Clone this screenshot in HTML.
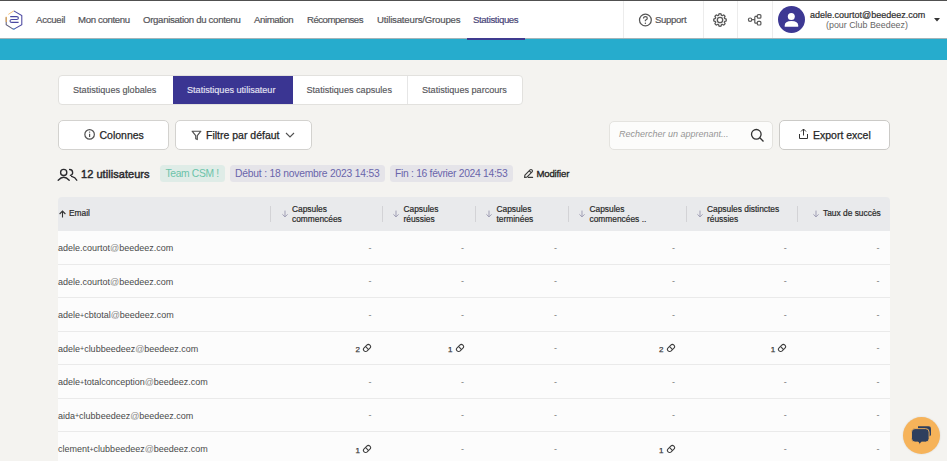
<!DOCTYPE html>
<html><head><meta charset="utf-8">
<style>
*{box-sizing:border-box;margin:0;padding:0}
html,body{width:947px;height:461px;overflow:hidden;background:#f4f3f0;font-family:"Liberation Sans",sans-serif;color:#333}
.a{position:absolute;white-space:nowrap}
#topline{position:absolute;left:0;top:0;width:947px;height:1px;background:#505050}
#nav{position:absolute;left:0;top:1px;width:947px;height:37px;background:#fff}
#teal{position:absolute;left:0;top:38px;width:947px;height:22px;background:#26accd;border-top:1px solid #a3b4b8}
.nv{position:absolute;top:13.5px;font-size:9.6px;color:#55555a;line-height:11px;-webkit-text-stroke:0.2px #55555a}
.sep{position:absolute;top:1px;width:1px;height:37px;background:#ececec}
.tabs{position:absolute;left:58px;top:75px;width:465px;height:30px;background:#fff;border:1px solid #e2e1de;border-radius:4px;overflow:hidden}
.tab{position:absolute;top:10px;font-size:9.1px;color:#56565b;line-height:11px;-webkit-text-stroke:0.15px #56565b}
.btn{position:absolute;background:#fff;border:1px solid #d3d2cf;border-radius:5px}
.bt{position:absolute;font-size:10.5px;color:#262626;line-height:12px;-webkit-text-stroke:0.25px #262626}
.badge{position:absolute;top:164.7px;height:17.6px;border-radius:3.5px}
.bdt{position:absolute;top:167.6px;font-size:9.8px;line-height:11px}
#thead{position:absolute;left:58px;top:197px;width:832px;height:34px;background:#e9eaec;border-radius:4px 4px 0 0}
.hs{position:absolute;top:206px;width:1px;height:15.5px;background:#d3d3d6}
.ht{position:absolute;font-size:8.4px;color:#2a2a2a;line-height:9.3px;-webkit-text-stroke:0.2px #2a2a2a}
.row{position:absolute;left:58px;width:832px;height:33.4px;background:#fafafa;border-bottom:1px solid #e8e8e8}
.em{position:absolute;left:58px;font-size:9px;color:#4a4a4a;line-height:11px}
.d{position:absolute;font-size:9px;color:#777;line-height:10px}
</style></head><body>
<div id="topline"></div>
<div id="nav"></div>
<div id="teal"></div>

<!-- logo -->
<svg class="a" style="left:4px;top:9px" width="20" height="22" viewBox="0 0 20 22">
  <defs>
    <linearGradient id="lg" x1="0" y1="0" x2="1" y2="1">
      <stop offset="0" stop-color="#f2b04e"/><stop offset="0.45" stop-color="#6c5f9a"/><stop offset="1" stop-color="#4d8fd8"/>
    </linearGradient>
  </defs>
  <path d="M9.8 1.9 L17.8 6.6 V15.6 L9.5 20.4" fill="none" stroke="#4a47a0" stroke-width="1.05"/>
  <path d="M9.5 20.4 L2.2 15.8 V8.2" fill="none" stroke="#5f5d7c" stroke-width="1.05"/>
  <path d="M2.2 7.8 V13" fill="none" stroke="#f0ad4a" stroke-width="1.05"/>
  <path d="M4.3 5.4 L9.8 1.9" fill="none" stroke="#f4c27a" stroke-width="1"/>
  <path d="M9.3 20.2 L10.6 19.6" fill="none" stroke="#4fa3e0" stroke-width="1.3"/>
  <path d="M6.2 7.6 H12.6 Q14.4 7.6 14.4 9.1 Q14.4 10.5 12.6 10.5 H7.8 Q6 10.5 6 12 Q6 13.4 7.8 13.4 H14.6" fill="none" stroke="#4a47a0" stroke-width="1.1"/>
</svg>

<div class="nv" style="left:36px;letter-spacing:-0.25px">Accueil</div>
<div class="nv" style="left:78px;letter-spacing:-0.33px">Mon contenu</div>
<div class="nv" style="left:143px;letter-spacing:-0.3px">Organisation du contenu</div>
<div class="nv" style="left:254px;letter-spacing:-0.39px">Animation</div>
<div class="nv" style="left:307px;letter-spacing:-0.49px">Récompenses</div>
<div class="nv" style="left:377px;letter-spacing:-0.18px">Utilisateurs/Groupes</div>
<div class="nv" style="left:473px;color:#3f3a8f;letter-spacing:-0.36px">Statistiques</div>
<div class="a" style="left:466.5px;top:38px;width:58px;height:2px;background:#3f3a8f;z-index:2"></div>

<div class="sep" style="left:623px"></div>
<div class="sep" style="left:703px"></div>
<div class="sep" style="left:737px"></div>
<div class="sep" style="left:772px"></div>

<!-- support -->
<svg class="a" style="left:638px;top:12.5px" width="15" height="14" viewBox="0 0 15 14">
  <circle cx="7.4" cy="7" r="5.9" fill="none" stroke="#555" stroke-width="1.25"/>
  <path d="M5.5 5.5 Q5.5 3.6 7.4 3.6 Q9.3 3.6 9.3 5.3 Q9.3 6.5 7.4 7.2 V8.3" fill="none" stroke="#555" stroke-width="1.2"/>
  <circle cx="7.4" cy="10.2" r="0.75" fill="#555"/>
</svg>
<div class="nv" style="left:655px;letter-spacing:-0.33px">Support</div>

<!-- gear -->
<svg class="a" style="left:712.2px;top:11.5px" width="16" height="16" viewBox="0 0 16 16">
  <path d="M14.25 8.00 L14.25 8.20 L14.24 8.39 L14.22 8.59 L14.19 8.78 L14.13 8.97 L13.96 9.14 L13.54 9.24 L13.05 9.30 L12.78 9.39 L12.66 9.51 L12.58 9.65 L12.52 9.79 L12.47 9.93 L12.41 10.07 L12.36 10.22 L12.36 10.40 L12.49 10.65 L12.80 11.04 L13.02 11.41 L13.02 11.65 L12.93 11.82 L12.81 11.98 L12.69 12.13 L12.56 12.28 L12.42 12.42 L12.28 12.56 L12.13 12.69 L11.98 12.81 L11.82 12.93 L11.65 13.02 L11.41 13.02 L11.04 12.80 L10.65 12.49 L10.40 12.36 L10.22 12.36 L10.07 12.41 L9.93 12.47 L9.79 12.52 L9.65 12.58 L9.51 12.66 L9.39 12.78 L9.30 13.05 L9.24 13.54 L9.14 13.96 L8.97 14.13 L8.78 14.19 L8.59 14.22 L8.39 14.24 L8.20 14.25 L8.00 14.25 L7.80 14.25 L7.61 14.24 L7.41 14.22 L7.22 14.19 L7.03 14.13 L6.86 13.96 L6.76 13.54 L6.70 13.05 L6.61 12.78 L6.49 12.66 L6.35 12.58 L6.21 12.52 L6.07 12.47 L5.93 12.41 L5.78 12.36 L5.60 12.36 L5.35 12.49 L4.96 12.80 L4.59 13.02 L4.35 13.02 L4.18 12.93 L4.02 12.81 L3.87 12.69 L3.72 12.56 L3.58 12.42 L3.44 12.28 L3.31 12.13 L3.19 11.98 L3.07 11.82 L2.98 11.65 L2.98 11.41 L3.20 11.04 L3.51 10.65 L3.64 10.40 L3.64 10.22 L3.59 10.07 L3.53 9.93 L3.48 9.79 L3.42 9.65 L3.34 9.51 L3.22 9.39 L2.95 9.30 L2.46 9.24 L2.04 9.14 L1.87 8.97 L1.81 8.78 L1.78 8.59 L1.76 8.39 L1.75 8.20 L1.75 8.00 L1.75 7.80 L1.76 7.61 L1.78 7.41 L1.81 7.22 L1.87 7.03 L2.04 6.86 L2.46 6.76 L2.95 6.70 L3.22 6.61 L3.34 6.49 L3.42 6.35 L3.48 6.21 L3.53 6.07 L3.59 5.93 L3.64 5.78 L3.64 5.60 L3.51 5.35 L3.20 4.96 L2.98 4.59 L2.98 4.35 L3.07 4.18 L3.19 4.02 L3.31 3.87 L3.44 3.72 L3.58 3.58 L3.72 3.44 L3.87 3.31 L4.02 3.19 L4.18 3.07 L4.35 2.98 L4.59 2.98 L4.96 3.20 L5.35 3.51 L5.60 3.64 L5.78 3.64 L5.93 3.59 L6.07 3.53 L6.21 3.48 L6.35 3.42 L6.49 3.34 L6.61 3.22 L6.70 2.95 L6.76 2.46 L6.86 2.04 L7.03 1.87 L7.22 1.81 L7.41 1.78 L7.61 1.76 L7.80 1.75 L8.00 1.75 L8.20 1.75 L8.39 1.76 L8.59 1.78 L8.78 1.81 L8.97 1.87 L9.14 2.04 L9.24 2.46 L9.30 2.95 L9.39 3.22 L9.51 3.34 L9.65 3.42 L9.79 3.48 L9.93 3.53 L10.07 3.59 L10.22 3.64 L10.40 3.64 L10.65 3.51 L11.04 3.20 L11.41 2.98 L11.65 2.98 L11.82 3.07 L11.98 3.19 L12.13 3.31 L12.28 3.44 L12.42 3.58 L12.56 3.72 L12.69 3.87 L12.81 4.02 L12.93 4.18 L13.02 4.35 L13.02 4.59 L12.80 4.96 L12.49 5.35 L12.36 5.60 L12.36 5.78 L12.41 5.93 L12.47 6.07 L12.52 6.21 L12.58 6.35 L12.66 6.49 L12.78 6.61 L13.05 6.70 L13.54 6.76 L13.96 6.86 L14.13 7.03 L14.19 7.22 L14.22 7.41 L14.24 7.61 L14.25 7.80 Z" fill="none" stroke="#5a5a5a" stroke-width="1.3" stroke-linejoin="round"/>
  <circle cx="8" cy="8" r="2.7" fill="none" stroke="#5a5a5a" stroke-width="1.3"/>
</svg>

<!-- share/hierarchy -->
<svg class="a" style="left:747px;top:13px" width="16" height="14" viewBox="0 0 16 14">
  <circle cx="3.1" cy="6.7" r="1.7" fill="none" stroke="#5a5a5a" stroke-width="1.2"/>
  <rect x="10.3" y="1.6" width="3.6" height="3.6" rx="1" fill="none" stroke="#5a5a5a" stroke-width="1.2"/>
  <rect x="10.3" y="8.4" width="3.6" height="3.6" rx="1" fill="none" stroke="#5a5a5a" stroke-width="1.2"/>
  <path d="M4.8 6.7 H7.8 M7.8 3.4 V10.2 M7.8 3.4 H10.3 M7.8 10.2 H10.3" fill="none" stroke="#5a5a5a" stroke-width="1.2"/>
</svg>

<!-- avatar -->
<div class="a" style="left:777.7px;top:6px;width:27.2px;height:27px;border-radius:50%;background:#3d3893"></div>
<svg class="a" style="left:783px;top:12px" width="17" height="16" viewBox="0 0 17 16">
  <circle cx="8.3" cy="4.5" r="3.5" fill="#fff"/>
  <path d="M1.7 14.7 V13.6 Q1.7 9 8.45 9 Q15.2 9 15.2 13.6 V14.7 Z" fill="#fff"/>
</svg>
<div class="a" style="left:810px;top:10px;font-size:9px;color:#2e2e2e;line-height:10px;-webkit-text-stroke:0.2px #2e2e2e">adele.courtot@beedeez.com</div>
<div class="a" style="left:826px;top:19.5px;font-size:8.9px;color:#666;line-height:10px">(pour Club Beedeez)</div>
<svg class="a" style="left:934px;top:18px" width="6" height="4" viewBox="0 0 6 4"><path d="M0 0 H6 L3 3.5 Z" fill="#333"/></svg>

<!-- tabs -->
<div class="tabs">
  <div class="a" style="left:114px;top:0;width:120px;height:30px;background:#3a3592"></div>
  <div class="a" style="left:348px;top:0;width:1px;height:30px;background:#e6e6e6"></div>
</div>
<div class="tab" style="left:73px;top:84.8px">Statistiques globales</div>
<div class="tab" style="left:187px;top:84.8px;color:#e4e3f2;-webkit-text-stroke:0.15px #e4e3f2">Statistiques utilisateur</div>
<div class="tab" style="left:306.5px;top:84.8px">Statistiques capsules</div>
<div class="tab" style="left:422px;top:84.8px">Statistiques parcours</div>

<!-- buttons -->
<div class="btn" style="left:58px;top:120px;width:111px;height:30px"></div>
<svg class="a" style="left:84px;top:129px" width="11" height="11" viewBox="0 0 11 11">
  <circle cx="5.6" cy="5.4" r="4.75" fill="none" stroke="#505050" stroke-width="1.2"/>
  <path d="M5.6 4.7 V8.1" stroke="#505050" stroke-width="1.2"/>
  <circle cx="5.6" cy="3.1" r="0.7" fill="#505050"/>
</svg>
<div class="bt" style="left:99.5px;top:128.6px">Colonnes</div>

<div class="btn" style="left:174.5px;top:120px;width:137px;height:30px"></div>
<svg class="a" style="left:190.5px;top:129.5px" width="11" height="11" viewBox="0 0 11 11">
  <path d="M1.1 1.2 H9.9 L6.3 5.7 V9.6 L4.7 8.7 V5.7 Z" fill="none" stroke="#505050" stroke-width="1.15" stroke-linejoin="round"/>
</svg>
<div class="bt" style="left:206px;top:128.6px">Filtre par défaut</div>
<svg class="a" style="left:285px;top:132px" width="10" height="6" viewBox="0 0 10 6"><path d="M1 1 L5 5 L9 1" fill="none" stroke="#505050" stroke-width="1.1"/></svg>

<div class="btn" style="left:608.5px;top:120.5px;width:164px;height:29px;border-color:#e4e3df;background:#fcfcfb"></div>
<div class="a" style="left:619px;top:129px;font-size:9px;font-style:italic;color:#959595;line-height:11px">Rechercher un apprenant...</div>
<svg class="a" style="left:750px;top:128px" width="15" height="15" viewBox="0 0 15 15">
  <circle cx="6.3" cy="6.3" r="4.8" fill="none" stroke="#333" stroke-width="1.3"/>
  <path d="M9.8 9.8 L13.5 13.5" stroke="#333" stroke-width="1.3"/>
</svg>

<div class="btn" style="left:779px;top:120px;width:110.5px;height:30px;border-color:#cbcac7"></div>
<svg class="a" style="left:798px;top:128px" width="11" height="12" viewBox="0 0 11 12">
  <path d="M5.5 1 V7.5 M3 3.5 L5.5 1 L8 3.5" fill="none" stroke="#333" stroke-width="1"/>
  <path d="M1.5 6 V10.5 H9.5 V6" fill="none" stroke="#333" stroke-width="1"/>
</svg>
<div class="bt" style="left:813px;top:128.6px">Export excel</div>

<!-- stats row -->
<svg class="a" style="left:57px;top:168px" width="21" height="13" viewBox="0 0 21 13">
  <circle cx="6.7" cy="4.4" r="3.1" fill="none" stroke="#2a2a2e" stroke-width="1.35"/>
  <path d="M1.2 12.2 Q6.7 6.2 12.2 12.2" fill="none" stroke="#2a2a2e" stroke-width="1.35" stroke-linecap="round"/>
  <path d="M12.6 1.5 A3 3 0 0 1 13.4 7.4" fill="none" stroke="#2a2a2e" stroke-width="1.35" stroke-linecap="round"/>
  <path d="M14.6 8.4 Q18.3 9.2 19.8 12.2" fill="none" stroke="#2a2a2e" stroke-width="1.35" stroke-linecap="round"/>
</svg>
<div class="a" style="left:81px;top:168px;font-size:11px;color:#2a2a2e;line-height:12px;letter-spacing:0.05px;-webkit-text-stroke:0.45px #2a2a2e">12 utilisateurs</div>

<div class="badge" style="left:160.3px;width:64.5px;background:#dfece7"></div>
<div class="bdt" style="left:165.5px;color:#6cc3a9;font-size:10.3px;letter-spacing:-0.34px">Team CSM !</div>
<div class="badge" style="left:230px;width:155px;background:#e5e4e9"></div>
<div class="bdt" style="left:235px;color:#6a64ab;font-size:10.3px;letter-spacing:-0.2px">Début : 18 novembre 2023 14:53</div>
<div class="badge" style="left:390px;width:123px;background:#e5e4e9"></div>
<div class="bdt" style="left:395px;color:#6a64ab;font-size:10.3px;letter-spacing:-0.29px">Fin : 16 février 2024 14:53</div>

<svg class="a" style="left:523px;top:168px" width="11" height="11" viewBox="0 0 11 11">
  <path d="M1.6 9.4 L1.9 7.1 L7.1 1.9 Q8 1.0 8.9 1.9 L9.1 2.1 Q10 3 9.1 3.9 L3.9 9.1 Z M6.3 2.8 L8.2 4.7 M5.4 9.4 H9.6" fill="none" stroke="#3a3a3a" stroke-width="1.15" stroke-linejoin="round" stroke-linecap="round"/>
</svg>
<div class="a" style="left:536.5px;top:168px;font-size:9.6px;color:#222;line-height:11px;letter-spacing:-0.18px;-webkit-text-stroke:0.3px #222">Modifier</div>

<!-- table -->
<div id="thead"></div>
<div class="hs" style="left:270px"></div>
<div class="hs" style="left:381.5px"></div>
<div class="hs" style="left:474.5px"></div>
<div class="hs" style="left:567.5px"></div>
<div class="hs" style="left:685.5px"></div>
<div class="hs" style="left:797px"></div>

<svg class="a" style="left:57.5px;top:210px" width="9" height="8" viewBox="0 0 9 8"><path d="M4.5 7.5 V1.2 M1.6 4 L4.5 1.1 L7.4 4" fill="none" stroke="#333" stroke-width="1.1"/></svg>
<div class="ht" style="left:69px;top:209px">Email</div>

<svg class="a" style="left:280.5px;top:210px" width="8" height="8" viewBox="0 0 8 8"><path d="M4 0.6 V6.9 M1.4 4.3 L4 6.9 L6.6 4.3" fill="none" stroke="#9d9bb2" stroke-width="0.95"/></svg>
<div class="ht" style="left:292px;top:205.3px">Capsules<br>commencées</div>
<svg class="a" style="left:392px;top:210px" width="8" height="8" viewBox="0 0 8 8"><path d="M4 0.6 V6.9 M1.4 4.3 L4 6.9 L6.6 4.3" fill="none" stroke="#9d9bb2" stroke-width="0.95"/></svg>
<div class="ht" style="left:403.5px;top:205.3px">Capsules<br>réussies</div>
<svg class="a" style="left:485px;top:210px" width="8" height="8" viewBox="0 0 8 8"><path d="M4 0.6 V6.9 M1.4 4.3 L4 6.9 L6.6 4.3" fill="none" stroke="#9d9bb2" stroke-width="0.95"/></svg>
<div class="ht" style="left:496.5px;top:205.3px">Capsules<br>terminées</div>
<svg class="a" style="left:578px;top:210px" width="8" height="8" viewBox="0 0 8 8"><path d="M4 0.6 V6.9 M1.4 4.3 L4 6.9 L6.6 4.3" fill="none" stroke="#9d9bb2" stroke-width="0.95"/></svg>
<div class="ht" style="left:589.5px;top:205.3px">Capsules<br>commencées ..</div>
<svg class="a" style="left:695.5px;top:210px" width="8" height="8" viewBox="0 0 8 8"><path d="M4 0.6 V6.9 M1.4 4.3 L4 6.9 L6.6 4.3" fill="none" stroke="#9d9bb2" stroke-width="0.95"/></svg>
<div class="ht" style="left:707px;top:205.3px">Capsules distinctes<br>réussies</div>
<svg class="a" style="left:811.5px;top:210px" width="8" height="8" viewBox="0 0 8 8"><path d="M4 0.6 V6.9 M1.4 4.3 L4 6.9 L6.6 4.3" fill="none" stroke="#9d9bb2" stroke-width="0.95"/></svg>
<div class="ht" style="left:823px;top:209px">Taux de succès</div>

<div id="rows">
<div class="a" style="left:58px;top:230.5px;width:832px;height:235px;background:#fcfcfc"></div>
<div class="a" style="left:58px;top:263.56px;width:832px;height:1px;background:#eaeaea"></div>
<div class="em" style="top:243.00px">adele.courtot<span style="color:#8a8a8a">@</span>beedeez.com</div>
<div class="d" style="right:575.5px;top:242.50px">-</div>
<div class="d" style="right:483.0px;top:242.50px">-</div>
<div class="d" style="right:390.0px;top:242.50px">-</div>
<div class="d" style="right:272.0px;top:242.50px">-</div>
<div class="d" style="right:160.2px;top:242.50px">-</div>
<div class="d" style="right:67.5px;top:242.50px">-</div>
<div class="a" style="left:58px;top:297.12px;width:832px;height:1px;background:#eaeaea"></div>
<div class="em" style="top:276.56px">adele.courtot<span style="color:#8a8a8a">@</span>beedeez.com</div>
<div class="d" style="right:575.5px;top:276.06px">-</div>
<div class="d" style="right:483.0px;top:276.06px">-</div>
<div class="d" style="right:390.0px;top:276.06px">-</div>
<div class="d" style="right:272.0px;top:276.06px">-</div>
<div class="d" style="right:160.2px;top:276.06px">-</div>
<div class="d" style="right:67.5px;top:276.06px">-</div>
<div class="a" style="left:58px;top:330.68px;width:832px;height:1px;background:#eaeaea"></div>
<div class="em" style="top:310.12px">adele<span style="font-size:7px;line-height:0;position:relative;top:-0.5px">+</span>cbtotal<span style="color:#8a8a8a">@</span>beedeez.com</div>
<div class="d" style="right:575.5px;top:309.62px">-</div>
<div class="d" style="right:483.0px;top:309.62px">-</div>
<div class="d" style="right:390.0px;top:309.62px">-</div>
<div class="d" style="right:272.0px;top:309.62px">-</div>
<div class="d" style="right:160.2px;top:309.62px">-</div>
<div class="d" style="right:67.5px;top:309.62px">-</div>
<div class="a" style="left:58px;top:364.24px;width:832px;height:1px;background:#eaeaea"></div>
<div class="em" style="top:343.68px">adele<span style="font-size:7px;line-height:0;position:relative;top:-0.5px">+</span>clubbeedeez<span style="color:#8a8a8a">@</span>beedeez.com</div>
<div class="d" style="right:575.0px;top:343.18px;color:#3c3c3c;font-size:8px;-webkit-text-stroke:0.25px #3c3c3c">2<svg width="10" height="10" viewBox="0 0 10 10" style="vertical-align:-1.5px;margin-left:2px"><g transform="rotate(-45 5 5)"><rect x="0.9" y="2.8" width="8.2" height="4.4" rx="2.2" fill="none" stroke="#3c3c3c" stroke-width="1.05"/><path d="M5 2.8 V7.2" stroke="#3c3c3c" stroke-width="1.05"/></g></svg></div>
<div class="d" style="right:482.5px;top:343.18px;color:#3c3c3c;font-size:8px;-webkit-text-stroke:0.25px #3c3c3c">1<svg width="10" height="10" viewBox="0 0 10 10" style="vertical-align:-1.5px;margin-left:2px"><g transform="rotate(-45 5 5)"><rect x="0.9" y="2.8" width="8.2" height="4.4" rx="2.2" fill="none" stroke="#3c3c3c" stroke-width="1.05"/><path d="M5 2.8 V7.2" stroke="#3c3c3c" stroke-width="1.05"/></g></svg></div>
<div class="d" style="right:390.0px;top:343.18px">-</div>
<div class="d" style="right:271.5px;top:343.18px;color:#3c3c3c;font-size:8px;-webkit-text-stroke:0.25px #3c3c3c">2<svg width="10" height="10" viewBox="0 0 10 10" style="vertical-align:-1.5px;margin-left:2px"><g transform="rotate(-45 5 5)"><rect x="0.9" y="2.8" width="8.2" height="4.4" rx="2.2" fill="none" stroke="#3c3c3c" stroke-width="1.05"/><path d="M5 2.8 V7.2" stroke="#3c3c3c" stroke-width="1.05"/></g></svg></div>
<div class="d" style="right:159.7px;top:343.18px;color:#3c3c3c;font-size:8px;-webkit-text-stroke:0.25px #3c3c3c">1<svg width="10" height="10" viewBox="0 0 10 10" style="vertical-align:-1.5px;margin-left:2px"><g transform="rotate(-45 5 5)"><rect x="0.9" y="2.8" width="8.2" height="4.4" rx="2.2" fill="none" stroke="#3c3c3c" stroke-width="1.05"/><path d="M5 2.8 V7.2" stroke="#3c3c3c" stroke-width="1.05"/></g></svg></div>
<div class="d" style="right:67.5px;top:343.18px">-</div>
<div class="a" style="left:58px;top:397.80px;width:832px;height:1px;background:#eaeaea"></div>
<div class="em" style="top:377.24px">adele<span style="font-size:7px;line-height:0;position:relative;top:-0.5px">+</span>totalconception<span style="color:#8a8a8a">@</span>beedeez.com</div>
<div class="d" style="right:575.5px;top:376.74px">-</div>
<div class="d" style="right:483.0px;top:376.74px">-</div>
<div class="d" style="right:390.0px;top:376.74px">-</div>
<div class="d" style="right:272.0px;top:376.74px">-</div>
<div class="d" style="right:160.2px;top:376.74px">-</div>
<div class="d" style="right:67.5px;top:376.74px">-</div>
<div class="a" style="left:58px;top:431.36px;width:832px;height:1px;background:#eaeaea"></div>
<div class="em" style="top:410.80px">aida<span style="font-size:7px;line-height:0;position:relative;top:-0.5px">+</span>clubbeedeez<span style="color:#8a8a8a">@</span>beedeez.com</div>
<div class="d" style="right:575.5px;top:410.30px">-</div>
<div class="d" style="right:483.0px;top:410.30px">-</div>
<div class="d" style="right:390.0px;top:410.30px">-</div>
<div class="d" style="right:272.0px;top:410.30px">-</div>
<div class="d" style="right:160.2px;top:410.30px">-</div>
<div class="d" style="right:67.5px;top:410.30px">-</div>
<div class="a" style="left:58px;top:464.92px;width:832px;height:1px;background:#eaeaea"></div>
<div class="em" style="top:444.36px">clement<span style="font-size:7px;line-height:0;position:relative;top:-0.5px">+</span>clubbeedeez<span style="color:#8a8a8a">@</span>beedeez.com</div>
<div class="d" style="right:575.0px;top:443.86px;color:#3c3c3c;font-size:8px;-webkit-text-stroke:0.25px #3c3c3c">1<svg width="10" height="10" viewBox="0 0 10 10" style="vertical-align:-1.5px;margin-left:2px"><g transform="rotate(-45 5 5)"><rect x="0.9" y="2.8" width="8.2" height="4.4" rx="2.2" fill="none" stroke="#3c3c3c" stroke-width="1.05"/><path d="M5 2.8 V7.2" stroke="#3c3c3c" stroke-width="1.05"/></g></svg></div>
<div class="d" style="right:483.0px;top:443.86px">-</div>
<div class="d" style="right:390.0px;top:443.86px">-</div>
<div class="d" style="right:271.5px;top:443.86px;color:#3c3c3c;font-size:8px;-webkit-text-stroke:0.25px #3c3c3c">1<svg width="10" height="10" viewBox="0 0 10 10" style="vertical-align:-1.5px;margin-left:2px"><g transform="rotate(-45 5 5)"><rect x="0.9" y="2.8" width="8.2" height="4.4" rx="2.2" fill="none" stroke="#3c3c3c" stroke-width="1.05"/><path d="M5 2.8 V7.2" stroke="#3c3c3c" stroke-width="1.05"/></g></svg></div>
<div class="d" style="right:160.2px;top:443.86px">-</div>
<div class="d" style="right:67.5px;top:443.86px">-</div>
</div><!--/rows-->
<!-- chat -->
<div class="a" style="left:902.5px;top:417px;width:37px;height:37px;border-radius:50%;background:#f6b35a;box-shadow:0 0 2px rgba(0,0,0,0.12)"></div>
<svg class="a" style="left:910px;top:425px" width="23" height="21" viewBox="0 0 23 21">
  <path d="M8 1.2 H18.6 Q21 1.2 21 3.6 V9.2 Q21 11.6 18.6 11.6 H8 Z" fill="#2e3f5e"/>
  <path d="M5 3.6 H15.6 Q19.1 3.6 19.1 7.1 V13.6 Q19.1 17.1 15.6 17.1 H11.4 L9.8 19.6 L8.2 17.1 H5 Q1.5 17.1 1.5 13.6 V7.1 Q1.5 3.6 5 3.6 Z" fill="#2e3f5e" stroke="#f6b35a" stroke-width="0.9"/>
</svg>
</body></html>
